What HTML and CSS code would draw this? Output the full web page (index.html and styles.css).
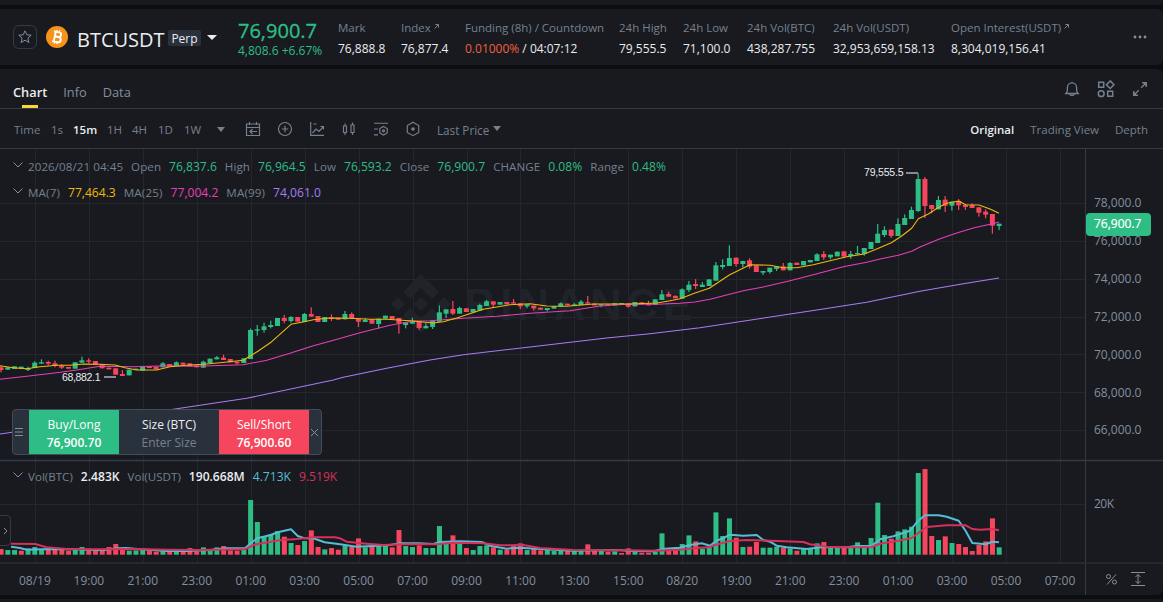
FILE: index.html
```html
<!DOCTYPE html>
<html lang="en">
<head>
<meta charset="utf-8">
<title>BTCUSDT Perp</title>
<link rel="stylesheet" href="styles.css">
</head>
<body>
<div class="strip strip-top"></div>
<header class="ticker">
  <button class="star" aria-label="Favorite"><svg width="14" height="14" viewBox="0 0 14 14"><path d="M7 .8 8.800 4.800l4.400.4-3.300 2.900 1 4.400L7 10.200l-3.900 2.300 1-4.400L.8 5.200l4.400-.4z"/></svg></button>
  <svg class="coin" width="22" height="22" viewBox="0 0 22 22"><circle cx="11" cy="11" r="11" fill="#f7931a"/><g transform="rotate(12 11 11)" fill="none" stroke="#fff" stroke-width="1.900"><path d="M8.700 6v10M7 6h5.200a2.300 2.300 0 0 1 0 4.700H9M7 16h5.600a2.600 2.600 0 0 0 0-5.300"/><path d="M9.700 4v2M12.300 4v2M9.700 16v2M12.300 16v2" stroke-width="1.200"/></g></svg>
  <div class="symbol"><h1>BTCUSDT</h1><span class="perp">Perp</span><i class="caret caret-white"></i></div>
  <div class="last"><div class="last-price">76,900.7</div><div class="last-change">4,808.6 +6.67%</div></div>
  <dl class="stats">
    <div><dt>Mark</dt><dd>76,888.8</dd></div>
    <div><dt>Index <svg class="ext" width="5" height="5" viewBox="0 0 5 5"><path d="M.5 4.500 4.300.7M1.300.5h3.200v3.200"/></svg></dt><dd>76,877.4</dd></div>
    <div><dt>Funding (8h) / Countdown</dt><dd><span class="fund">0.01000%</span> / 04:07:12</dd></div>
    <div><dt>24h High</dt><dd>79,555.5</dd></div>
    <div><dt>24h Low</dt><dd>71,100.0</dd></div>
    <div><dt>24h Vol(BTC)</dt><dd>438,287.755</dd></div>
    <div><dt>24h Vol(USDT)</dt><dd>32,953,659,158.13</dd></div>
    <div><dt>Open Interest(USDT) <svg class="ext" width="5" height="5" viewBox="0 0 5 5"><path d="M.5 4.500 4.300.7M1.300.5h3.200v3.200"/></svg></dt><dd>8,304,019,156.41</dd></div>
  </dl>
  <svg class="more" width="14" height="4" viewBox="0 0 14 4"><circle cx="2" cy="2" r="1.400"/><circle cx="7" cy="2" r="1.400"/><circle cx="12" cy="2" r="1.400"/></svg>
</header>
<main class="panel">
  <nav class="tabs">
    <a class="tab active">Chart</a><a class="tab">Info</a><a class="tab">Data</a>
    <div class="tab-icons">
      <svg width="16" height="16" viewBox="0 0 16 16"><path stroke-width="1.300" d="M1.700 12.500h12.600L12.600 10V6.500a4.600 4.600 0 0 0-9.200 0V10zM5.500 12.700c.4 2.500 4.600 2.500 5 0M8 2V1"/></svg>
      <svg width="18" height="18" viewBox="0 0 18 18"><path stroke-width="1.500" d="M1.700 2.200h5v5h-5zM13.200.900 17 4.700l-3.800 3.800-3.800-3.800zM10.700 11.200h5v5h-5z"/><circle cx="4.200" cy="13.700" r="2.900" stroke-width="1.500"/></svg>
      <svg width="16" height="16" viewBox="0 0 16 16"><path stroke-width="1.300" d="m2.500 13.500 4.300-4.300M9.200 6.800l4.300-4.300M10 1.700h4.300V6M6 14.300H1.700V10"/><path class="solid" d="M10.500 1.500h4v4zM1.500 10.500v4h4z"/></svg>
    </div>
  </nav>
  <div class="toolbar">
    <div class="frames"><span>Time</span><span>1s</span><b>15m</b><span>1H</span><span>4H</span><span>1D</span><span>1W</span><i class="caret"></i></div>
    <div class="tools">
      <svg width="16" height="16" viewBox="0 0 16 16"><path d="M1.500 3h13v11.500h-13zM1.500 6.500h13M4.500 1v3M11.500 1v3M12 10.500H5M7.500 8 5 10.500 7.500 13"/></svg>
      <svg width="16" height="16" viewBox="0 0 16 16"><circle cx="8" cy="8" r="6.500"/><path d="M8 4.800v6.400M4.800 8h6.400"/></svg>
      <svg width="16" height="16" viewBox="0 0 16 16"><path d="M1.700 1v13.300H15M3.500 12l3.500-4 3 2.500 4.500-5M11.500 5.500h3v3M4.500 3h3"/></svg>
      <svg width="16" height="16" viewBox="0 0 16 16"><path d="M2.500 5h3v6.500h-3zM4 2.500V5M4 11.500V14M10 4h3v7.500h-3zM11.500 1.500V4M11.500 11.500V14"/></svg>
      <svg width="16" height="16" viewBox="0 0 16 16"><path d="M1 2.200h14M1 8h4M1 13.800h4M10.500 5.500l3.700 2.100v4.300l-3.700 2.100-3.700-2.100V7.600z"/><circle cx="10.500" cy="9.800" r="1"/></svg>
      <svg width="16" height="16" viewBox="0 0 16 16"><path d="m8 1.200 5.700 3.300v6.900L8 14.700l-5.700-3.300V4.500z"/><circle cx="8" cy="8" r="1.800" class="solid"/></svg>
    </div>
    <div class="source">Last Price<i class="caret"></i></div>
    <div class="views"><b>Original</b><span>Trading View</span><span>Depth</span></div>
  </div>
  <section class="chart">
    <svg id="plot" width="1163" height="446" viewBox="0 149 1163 446"></svg>
    <div class="legend legend-price"><svg class="chev" width="10" height="6" viewBox="0 0 10 6"><path d="m.5.5 4.500 4.500L9.500.5"/></svg><span>2026/08/21 04:45</span><span>Open</span><em class="up">76,837.6</em><span>High</span><em class="up">76,964.5</em><span>Low</span><em class="up">76,593.2</em><span>Close</span><em class="up">76,900.7</em><span>CHANGE</span><em class="up">0.08%</em><span>Range</span><em class="up">0.48%</em></div>
    <div class="legend legend-ma"><svg class="chev" width="10" height="6" viewBox="0 0 10 6"><path d="m.5.5 4.500 4.500L9.500.5"/></svg><span>MA(7)</span><em class="ma7">77,464.3</em><span>MA(25)</span><em class="ma25">77,004.2</em><span>MA(99)</span><em class="ma99">74,061.0</em></div>
    <div class="legend legend-vol"><svg class="chev" width="10" height="6" viewBox="0 0 10 6"><path d="m.5.5 4.500 4.500L9.500.5"/></svg><span>Vol(BTC)</span><em class="val">2.483K</em><span>Vol(USDT)</span><em class="val">190.668M</em><em class="v5">4.713K</em><em class="v10">9.519K</em></div>
    <div class="price-tag">76,900.7</div>
    <div class="order">
      <svg class="grip" width="16" height="10" viewBox="0 0 16 10"><path d="M2 1.500h8M2 5h8M2 8.500h8"/></svg>
      <div class="side buy"><span>Buy/Long</span><b>76,900.70</b></div>
      <div class="side size"><span>Size (BTC)</span><span class="hint">Enter Size</span></div>
      <div class="side sell"><span>Sell/Short</span><b>76,900.60</b></div>
      <svg class="close" width="9" height="9" viewBox="0 0 9 9"><path d="m1 1 7 7M8 1 1 8"/></svg>
    </div>
    <div class="expander"><svg width="5" height="8" viewBox="0 0 5 8"><path d="m1 1 3 3-3 3"/></svg></div>
  </section>
</main>
<div class="strip strip-bottom"></div>
<script src="chart.js"></script>
</body>
</html>
```
FILE: styles.css
```css
* { box-sizing: border-box; }
body { margin: 0; width: 1163px; height: 602px; overflow: hidden; background: #0b0e11; color: #eaecef; font: 12px/16px "Open Sans", "Noto Sans", sans-serif; display: flex; flex-direction: column; gap: 4px; }
h1, dl, dt, dd { margin: 0; }
svg { fill: none; flex: none; display: block; }
.strip { background: #181a20; flex: none; }
.strip-top { height: 5px; border-bottom-right-radius: 6px; }
.strip-bottom { height: 3px; border-top-right-radius: 6px; }
.ticker { height: 56px; flex: none; background: #181a20; border-radius: 0 6px 6px 0; display: flex; align-items: center; padding: 0 16px 0 13px; }
.star { width: 24px; height: 24px; padding: 0; border: 1px solid #333b47; border-radius: 6px; background: none; display: grid; place-items: center; flex: none; }
.star svg { stroke: #848e9c; stroke-width: 1; stroke-linejoin: round; }
.coin { margin-left: 9px; }
.symbol { width: 161px; flex: none; margin-left: 9px; display: flex; align-items: center; }
h1 { font-size: 20px; line-height: 24px; font-weight: 500; margin-top: 5px; width: 91px; white-space: nowrap; }
.perp { background: #29313d; border-radius: 2px; height: 16px; width: 33px; text-align: center; line-height: 18px; margin-top: 2px; }
.caret { width: 0; height: 0; border: 4px solid transparent; border-top: 5px solid #76808f; border-bottom: 0; flex: none; }
.caret-white { border-top-color: #eaecef; margin-left: 6px; border-left-width: 5px; border-right-width: 5px; }
.last { width: 100px; flex: none; color: #2ebd85; padding-top: 6px; }
.last-price { font-size: 20px; line-height: 22px; font-weight: 500; white-space: nowrap; -webkit-text-stroke: .3px #2ebd85; }
.last-change { line-height: 18px; white-space: nowrap; }
.stats { display: grid; grid-template-columns: 63px 64px 154px 64px 64px 86px 118px 140px; white-space: nowrap; padding-top: 4px; }
.stats dt { color: #76808f; line-height: 20px; font-size: 11.500px; }
.stats dd { line-height: 22px; font-weight: 500; }
.ext { display: inline-block; stroke: #76808f; vertical-align: 3px; }
.fund { color: #f0603f; }
.more { fill: #848e9c; margin-left: auto; }
.panel { height: 526px; flex: none; background: #181a20; border-radius: 0 6px 6px 0; overflow: hidden; }
.tabs { height: 40px; border-bottom: 1px solid #333b47; display: flex; gap: 16px; padding-left: 13px; }
.tab { color: #848e9c; font-size: 12.800px; line-height: 46px; height: 39px; position: relative; }
.tab.active { color: #eaecef; font-weight: 600; }
.tab.active::after { content: ""; position: absolute; bottom: 0; left: 9px; width: 16px; height: 3px; background: #fcd535; }
.tab-icons { margin-left: auto; padding: 12px 15px 0 0; display: flex; gap: 17px; stroke: #76808f; }
.tab-icons svg:nth-child(2) { margin-top: -1px; }
.solid { fill: #76808f; stroke: none; }
.toolbar { height: 40px; border-bottom: 1px solid #333b47; display: flex; align-items: center; padding: 2px 15px 0 14px; color: #76808f; white-space: nowrap; font-size: 11.500px; }
.toolbar b { color: #eaecef; font-weight: 600; }
.frames { display: grid; grid-template-columns: 37px 22px 34px 25px 26px 26px 33px 28px; align-items: center; }
.tools { display: flex; gap: 16px; stroke: #76808f; stroke-width: 1.150; margin-bottom: 2px; }
.source { display: flex; align-items: center; gap: 4px; margin-left: 16px; font-size: 11.700px; }
.source .caret { margin-bottom: 2px; }
.views { margin-left: auto; display: flex; gap: 16px; font-size: 11.500px; }
.chart { position: relative; height: 446px; }
.legend { position: absolute; left: 13px; display: flex; gap: 8px; align-items: center; color: #76808f; font-size: 11.600px; white-space: nowrap; }
.legend em { font-style: normal; font-size: 12.100px; }
.chev { stroke: #848e9c; margin: 0 -3px 4px 0; }
.legend-price { top: 10px; }
.legend-ma { top: 36px; }
.legend-price span { letter-spacing: .06px; }
.legend-ma span { letter-spacing: .15px; }
.legend-vol { top: 320px; }
.up { color: #2ebd85; }
.ma7 { color: #f0b90b; }
.ma25 { color: #e740b5; }
.ma99 { color: #a87cf5; }
.val { color: #eaecef; font-weight: 600; }
.v5 { color: #56bdd4; }
.v10 { color: #d6305b; }
.price-tag { position: absolute; left: 1086px; top: 64px; width: 65px; height: 23px; border-radius: 4px; background: #2ebd85; color: #fff; padding-left: 8px; line-height: 22px; font-weight: 500; -webkit-text-stroke: .2px #fff; }
.order { position: absolute; left: 12px; top: 260px; width: 310px; height: 46px; border: 1px solid #434c5a; border-radius: 4px; background: #29313d; display: flex; align-items: center; overflow: hidden; }
.side { width: 90px; height: 44px; display: flex; flex-direction: column; align-items: center; line-height: 18px; padding-top: 6px; color: #fff; }
.side b { font-weight: 600; }
.side.size { width: 100px; color: #eaecef; }
.buy { background: #2ebd85; }
.sell { background: #f6465d; }
.hint { color: #76808f; }
.grip, .close { stroke: #848e9c; }
.close { margin-left: 1px; }
.expander { position: absolute; left: -1px; top: 366px; width: 12px; height: 31px; border: 1px solid #333b47; border-radius: 0 4px 4px 0; background: #181a20; display: grid; place-items: center; }
.expander svg { stroke: #848e9c; }
.grid { stroke: #23262d; }
.axis { stroke: #333b47; }
.tick { fill: #848e9c; font-size: 12px; }
.mark { fill: #eaecef; font: 10.500px "Liberation Sans", sans-serif; }
.water { fill: #20232a; }
.water text { font: 700 44px "Liberation Sans", sans-serif; }
.g { fill: #2ebd85; }
.r { fill: #f6465d; }
.line { stroke-linejoin: round; }
.tool { stroke: #848e9c; }
```
FILE: chart.js
```js
// Each candle: direction, body top, body bottom, then wick top and wick bottom.
// Values are thirds of a pixel below the base of their group.
const groups = [
  [300, 'r202,210,198,217 g202,209 g199,207 g200,207 g205,210,200,213 g188,204,184 g187,190,178,192 r186,191,182,196 r190,198,182,202 r198,203,192,207 r201,206 g187,206 g181,188,170 r181,185,175,190 r183,194 r193,205 r203,208 r205,224 r222,228,210 g209,226 g206,210 g201,212 r199,204 r200,208 g190,202,186 r192,200 g187,198,184 r188,194 r190,199 r196,202 g185,203,182 g176,189 g172,178,168 r173,180,164 r177,187 r185,190,185,194 g175,189 g90,177,86 g88,92,75,107 g79,90,68,98 g75,81,62,85 g54,78 r54,63,45,70 g51,63,48,68 r51,65 g42,66,39 r42,50,22 r48,66 g51,66'],
  [260, 'r172,177,163,183 r173,179 g162,178,153 r162,176,157 r176,185,176,201 g180,186,174 r178,191 g176,192,176,205 g167,176 r168,178 r174,190,174,221 g187,195,187,205 g183,191,173 r184,204,184,210 g198,205,190 g183,201,183,207 g157,185,136 g148,161,148,174 r147,161,123,165 g144,161,140 r145,156 g147,157 g135,152,131 g124,138,120 r124,134,124,142 g126,134 r126,133 r127,130,117 r130,139,130,147 g133,139,133,145 r137,145,137,152 r143,149 g144,150,144,154 g138,146 g130,140,127 r131,136 g133,137,129 g125,135,120 r127,131,108 r131,136 g133,137,133,142 r133,136 g130,136 g129,132 r131,140,131,143 g126,139 r127,133 r131,136,122 g118,135 g103,120,90 r102,110,95 r107,115 g88,116,85 g74,90,63,96'],
  [150, 'r402,408,387,417 g404,411,396 g388,408 g346,392,336 g345,351,328,358 g324,348,286 r323,342,323,350 g333,342,333,352 r331,350,325,356 r346,366 g363,368,363,375 g353,366,353,371 g350,357,350,363 r349,361,339 g339,361,336 r338,345 g333,346 g330,337 g313,333,310 r312,322,303,330 g314,322,314,328 g305,319 r304,320 g312,318,303,326 g309,313,288 g294,312,294,317 g276,297 g251,279,222 g240,255,229,261 r239,258,239,264 g222,258,205 g204,225,193 g180,207,170 g87,183,70,186 r87,168,81,204 r165,177,165,190 g150,178,138 r149,167,138,186 g155,167,155,182 r153,166,147,180 r164,171,164,180 r165,174,160 r172,188,172,200 r185,194,178,205 r192,227,192,251 g221,228,221,240']
];
// Volume bar heights, in thirds of a pixel.
const volumes = ('r17 g14 g14 r12 g19 g23 g14 r14 r14 r14 r12 g14 g23 r12 r12 r13 r23 r32 r15 g12 g13 g16 r11 r9 g11 r9 g10 r9 r20 r10 g22 g11 g22 r26 r13 r12 g16 g164 g98 g56 g61 g71 r54 g35 r29 g41 r73 r23 g16 r20 ' +
  'r15 g28 r24 r49 g22 r26 g26 g28 r22 r74 g26 g23 r28 g20 g20 g86 g34 r58 g34 r20 g14 g26 g28 r22 g15 r15 r27 r34 g14 r19 r13 g16 g11 g13 r12 g11 g11 r31 r12 g12 r9 g10 r5 r19 g10 r6 r6 g9 g64 r14 r13 ' +
  'g32 g58 r40 g18 g24 g127 g56 g109 r51 g23 r24 r38 g21 g21 g24 r21 g19 r12 g17 g19 g34 r38 g21 g20 r21 g21 g37 g22 g50 g156 g59 r48 g70 g76 g84 g245 r257 r56 g44 r55 g35 r32 r23 r11 r29 r40 r109 g22').split(' ');
// Curves: runs of [x origin, y origin, points in thirds of a pixel].
const curves = [
  ['#a87cf5', 1.1, [[0,300,'0,402 36,397 530,326 740,295 1000,240'],[330,260,'40,352 170,325 300,300 400,284 600,261 830,234 960,221 1110,203'],[680,150,'410,480 560,457 720,424 850,401 957,384']]],
  ['#e740b5', 1.1, [[0,300,'0,238 80,229 170,218 230,210 300,199 400,200 500,197 590,199 680,196 730,194 800,181 870,160 940,137'],[330,260,'0,244 90,218 180,196 250,183 300,182 400,175 500,169 600,160 720,152 810,138 900,132 980,133'],[680,150,'0,460 45,456 90,448 190,422 250,411 330,392 400,374 490,350 560,337 600,327 655,316 695,304 720,291 776,268 830,249 880,234 930,223 957,216']]],
  ['#f0b90b', 1.1, [[0,300,'0,197 40,203 80,206 120,200 170,196 210,196 250,192 300,193 345,195 375,203 410,210 470,210 510,200 560,196 610,193 660,188 730,181 775,153 815,125 873,73 913,65 940,59 980,55'],[330,260,'0,174 60,175 120,178 170,178 240,182 310,189 340,185 380,174 460,148 540,134 600,131 650,138 710,139 790,132 900,132 980,129 1020,122'],[680,150,'0,446 45,429 88,415 148,375 210,344 270,346 310,353 350,353 400,344 450,332 500,320 553,312 590,297 634,278 665,258 695,235 715,206 745,192 776,172 800,160 836,153 857,164 897,165 930,177 957,190']]],
  ['#56bdd4', 2, [[0,455,'33,275 60,279 80,284 150,282 220,283 310,286 350,280 380,279 420,283 500,288 560,288 630,285 680,280 735,280 752,265 772,250 812,240 833,232 873,223 893,243 913,250 940,250 974,262'],[340,480,'0,193 50,200 100,198 150,195 180,190 235,190 280,192 300,186 360,184 425,186 450,197 500,206 540,203 600,207 700,212 830,210 880,213 940,214 975,206'],[680,455,'0,278 30,270 65,265 90,272 108,258 128,250 150,239 190,242 230,240 250,255 270,260 290,272 320,277 380,282 430,276 500,277 530,273 575,272 600,253 640,244 690,227 715,197 735,181 776,181 800,185 836,197 857,228 877,264 917,268 937,260 957,262']]],
  ['#d6305b', 2, [[0,455,'33,266 105,267 140,277 200,282 300,283 400,282 500,284 600,285 735,283 760,270 790,264 840,256 890,252 940,247 1005,247'],[340,480,'0,175 20,185 80,191 130,195 180,193 290,193 340,188 430,190 480,196 550,195 600,204 700,210 850,211 950,212'],[680,455,'0,284 50,279 88,277 108,269 150,258 200,255 270,257 370,261 390,268 440,275 500,277 575,276 600,266 655,257 695,249 720,230 740,216 800,211 857,211 877,222 900,224 937,222 957,226']]]
];
const X0 = 1, STEP = 6.744;
let out = '';
const line = (c, x1, y1, x2, y2, w = 1) => { out += `<path class="${c}" d="M${x1} ${y1}L${x2} ${y2}" stroke-width="${w}"/>`; };
const bar = (c, x, y, w, h) => { out += `<rect class="${c}" x="${x.toFixed(2)}" y="${y.toFixed(2)}" width="${w}" height="${h.toFixed(2)}"/>`; };

['08/19','19:00','21:00','23:00','01:00','03:00','05:00','07:00','09:00','11:00','13:00','15:00','08/20','19:00','21:00','23:00','01:00','03:00','05:00','07:00'].forEach((t, i) => {
  const x = 34.9 + i * 53.95;
  line('grid', Math.round(x) + .5, 149, Math.round(x) + .5, 563);
  out += `<text class="tick" x="${x}" y="585" text-anchor="middle">${t}</text>`;
});
['78','76','74','72','70','68','66'].forEach((t, i) => {
  const y = 203.5 + Math.round(i * 37.85);
  line('grid', 0, y, 1085, y);
  out += `<text class="tick" x="1094" y="${i > 3 && i < 6 ? y + 4.5 : y + 3.5}">${t},000.0</text>`;
});
line('grid', 0, 504.5, 1085, 504.5);
out += '<text class="tick" x="1094" y="508" textLength="20">20K</text>';

out += '<g class="water"><path d="m421 274 18 18-7 7-11-11-11 11-7-7zM421 333l18-18-7-7-11 11-11-11-7 7zM398 297l7 7-7 7-7-7zM421 297l7 7-7 7-7-7zM444 297l7 7-7 7-7-7z"/><text x="464" y="320" textLength="228">BINANCE</text></g>';

let i = 0;
for (const [base, list] of groups) for (const c of list.split(' ')) {
  const x = X0 + STEP * i++;
  const [t, b, h = t, l = b] = c.slice(1).split(',').map(Number);
  bar(c[0], x - .6, base + h / 3, 1.2, (l - h) / 3);
  bar(c[0], x - 2.5, base + t / 3, 5, Math.max(1.3, (b - t) / 3));
}
volumes.forEach((v, k) => bar(v[0], X0 + STEP * k - 2.4, 554.7 - v.slice(1) / 3, 5, v.slice(1) / 3));
for (const [color, w, runs] of curves) {
  const pts = runs.flatMap(([ox, oy, s]) => s.split(' ').map(p => { const [a, b] = p.split(',').map(Number); return [ox + a / 3, oy + b / 3]; })).sort((a, b) => a[0] - b[0]);
  out += `<polyline class="line" stroke="${color}" stroke-width="${w}" points="${pts.map(p => p.map(n => n.toFixed(1)).join()).join(' ')}"/>`;
}
out += '<text class="mark" x="62" y="380.500" textLength="38.500">68,882.1</text><text class="mark" x="864" y="176" textLength="39.500">79,555.5</text><path d="M104 377h12M906 173h12" stroke="#aab0b8" stroke-width="1.500"/>';
line('axis', 0, 460.500, 1163, 460.500, 1.500);
line('axis', 1085.500, 149, 1085.500, 595);
out += '<path d="M0 563H1163" stroke="#2a2e37" stroke-width="1.500"/>';
out += '<g class="tool"><circle cx="1108.500" cy="576.500" r="2"/><circle cx="1114.500" cy="582" r="2"/><path d="m1116 574.500-9 10M1131 572.500h14M1131 585.500h14M1138 574.500v9M1135.500 577l2.500-2.500 2.500 2.500M1135.500 581l2.500 2.500 2.500-2.500"/></g>';
document.getElementById('plot').innerHTML = out;
```
